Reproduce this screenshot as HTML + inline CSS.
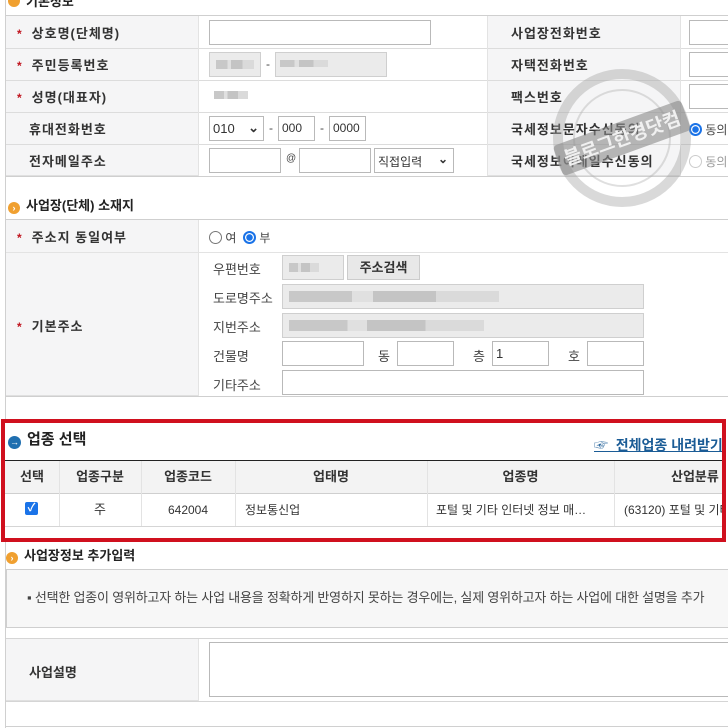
<!DOCTYPE html>
<html><head><meta charset="utf-8">
<style>
*{margin:0;padding:0;box-sizing:border-box}
body{width:728px;height:728px;overflow:hidden;background:#fff;position:relative;font-family:"Liberation Sans","Noto Sans CJK KR",sans-serif;font-size:13px;color:#333}
.a{position:absolute}
.lab{position:absolute;background:#f5f5f6;border-bottom:1px solid #e0e0e0}
.hl{position:absolute;height:1px;background:#dcdcdc}
.vl{position:absolute;width:1px;background:#e3e3e3}
.t{position:absolute;font-weight:bold;font-size:13px;color:#333;white-space:nowrap;letter-spacing:1px}
.star{color:#c0141e;font-size:12px;margin-right:9px;font-weight:bold}
.inp{position:absolute;border:1px solid #b9b9b9;background:#fff;height:25px;font-size:12px;padding:4px 3px;white-space:nowrap;overflow:hidden}
.dis{background:#ebebeb;border-color:#cfcfcf}
.blur{position:absolute;height:9px;background:linear-gradient(90deg,#c8c8c8 0 30%,#e0e0e0 30% 40%,#c4c4c4 40% 70%,#dadada 70%)}
.n{position:absolute;font-size:12px;color:#444;white-space:nowrap}
.sec{position:absolute;font-weight:bold;font-size:13px;color:#222;white-space:nowrap}
.dot{display:inline-block;width:12px;height:12px;border-radius:50%;background:#f0a030;vertical-align:-1px;margin-right:6px;color:#fff;font-size:9px;line-height:12px;text-align:center}
.th{position:absolute;top:461px;height:32px;line-height:32px;text-align:center;font-weight:bold;font-size:13px;color:#333;white-space:nowrap;overflow:hidden}
.td{position:absolute;top:494px;height:32px;line-height:32px;font-size:12px;color:#333;white-space:nowrap;overflow:hidden}
.radio{display:inline-block;width:13px;height:13px;border-radius:50%;border:1px solid #777;vertical-align:-2px;background:#fff}
.ron{border:2px solid #1a73e8;background:radial-gradient(#1a73e8 0 3px,#fff 3.5px)}
</style></head><body>
<div class="a" style="left:5px;top:0;width:1px;height:728px;background:#d0d0d0"></div>
<div class="a" style="left:5px;top:726px;width:723px;height:1px;background:#d0d0d0"></div>
<div class="sec" style="left:8px;top:-9px"><span class="dot"></span>기본정보</div>

<div class="hl" style="left:6px;top:15px;width:722px;background:#cfcfcf"></div>
<div class="lab" style="left:6px;top:16px;width:192px;height:160px"></div>
<div class="lab" style="left:487px;top:16px;width:193px;height:160px"></div>
<div class="hl" style="left:6px;top:48px;width:722px"></div>
<div class="hl" style="left:6px;top:80px;width:722px"></div>
<div class="hl" style="left:6px;top:112px;width:722px"></div>
<div class="hl" style="left:6px;top:144px;width:722px"></div>
<div class="hl" style="left:6px;top:176px;width:722px;background:#cfcfcf"></div>
<div class="vl" style="left:198px;top:16px;height:160px"></div>
<div class="vl" style="left:487px;top:16px;height:160px"></div>
<div class="vl" style="left:680px;top:16px;height:160px"></div>

<div class="t" style="left:17px;top:23px"><span class="star">*</span>상호명(단체명)</div>
<div class="t" style="left:17px;top:55px"><span class="star">*</span>주민등록번호</div>
<div class="t" style="left:17px;top:87px"><span class="star">*</span>성명(대표자)</div>
<div class="t" style="left:29px;top:119px">휴대전화번호</div>
<div class="t" style="left:29px;top:151px">전자메일주소</div>

<div class="inp" style="left:209px;top:20px;width:222px"></div>
<div class="inp dis" style="left:209px;top:52px;width:52px"><div class="blur" style="left:6px;top:7px;width:38px"></div></div>
<div class="n" style="left:266px;top:57px">-</div>
<div class="inp dis" style="left:275px;top:52px;width:112px"><div class="blur" style="left:4px;top:7px;width:48px;height:7px"></div></div>
<div class="blur" style="left:214px;top:91px;width:34px;height:8px"></div>
<div class="inp" style="left:209px;top:116px;width:55px;font-size:13px">010 <span style="position:absolute;right:4px;top:3px;font-weight:bold">&#8964;</span></div>
<div class="n" style="left:269px;top:121px">-</div>
<div class="inp" style="left:278px;top:116px;width:37px">000</div>
<div class="n" style="left:320px;top:121px">-</div>
<div class="inp" style="left:329px;top:116px;width:37px">0000</div>
<div class="inp" style="left:209px;top:148px;width:72px"></div>
<div class="n" style="left:286px;top:153px;font-size:10px">@</div>
<div class="inp" style="left:299px;top:148px;width:72px"></div>
<div class="inp" style="left:374px;top:148px;width:80px;font-size:12px">직접입력 <span style="position:absolute;right:5px;top:3px;font-weight:bold">&#8964;</span></div>

<div class="t" style="left:511px;top:23px">사업장전화번호</div>
<div class="t" style="left:511px;top:55px">자택전화번호</div>
<div class="t" style="left:511px;top:87px">팩스번호</div>
<div class="t" style="left:511px;top:119px">국세정보문자수신동의</div>
<div class="t" style="left:511px;top:151px">국세정보이메일수신동의</div>
<div class="inp" style="left:689px;top:20px;width:45px"></div>
<div class="inp" style="left:689px;top:52px;width:45px"></div>
<div class="inp" style="left:689px;top:84px;width:45px"></div>
<div class="n" style="left:689px;top:121px"><span class="radio ron"></span> 동의</div>
<div class="n" style="left:689px;top:153px;color:#999"><span class="radio" style="border-color:#ccc"></span> 동의</div>

<svg class="a" style="left:550px;top:60px" width="145" height="155" viewBox="0 0 145 155">
<circle cx="72" cy="78" r="64" fill="none" stroke="#a0a0a0" stroke-width="10" opacity=".4"/>
<circle cx="72" cy="78" r="48" fill="none" stroke="#b0b0b0" stroke-width="2" opacity=".4"/>
<g transform="rotate(-20 72 78)"><rect x="4" y="62" width="136" height="32" rx="4" fill="#8a8a8a" opacity=".6"/>
<text x="72" y="85" text-anchor="middle" font-size="19" font-weight="bold" fill="#f0f0f0" font-family="Noto Sans CJK KR,sans-serif">블로그한경닷컴</text></g>
</svg>

<div class="sec" style="left:8px;top:195px"><span class="dot">›</span>사업장(단체) 소재지</div>
<div class="hl" style="left:6px;top:219px;width:722px;background:#cfcfcf"></div>
<div class="lab" style="left:6px;top:220px;width:192px;height:176px"></div>
<div class="hl" style="left:6px;top:252px;width:722px;background:#e3e3e3"></div>
<div class="hl" style="left:6px;top:396px;width:722px;background:#cfcfcf"></div>
<div class="vl" style="left:198px;top:220px;height:176px"></div>
<div class="t" style="left:17px;top:227px"><span class="star">*</span>주소지 동일여부</div>
<div class="t" style="left:17px;top:316px"><span class="star">*</span>기본주소</div>
<div class="n" style="left:209px;top:229px"><span class="radio"></span> 여 &nbsp;<span class="radio ron"></span> 부</div>

<div class="n" style="left:213px;top:259px;font-size:13px">우편번호</div>
<div class="n" style="left:213px;top:288px;font-size:13px">도로명주소</div>
<div class="n" style="left:213px;top:317px;font-size:13px">지번주소</div>
<div class="n" style="left:213px;top:346px;font-size:13px">건물명</div>
<div class="n" style="left:213px;top:375px;font-size:13px">기타주소</div>
<div class="inp dis" style="left:282px;top:255px;width:62px"><div class="blur" style="left:6px;top:7px;width:30px"></div></div>
<div class="a" style="left:347px;top:255px;width:73px;height:25px;background:#e8e8e8;border:1px solid #ccc;font-weight:bold;font-size:13px;text-align:center;line-height:23px">주소검색</div>
<div class="inp dis" style="left:282px;top:284px;width:362px"><div class="blur" style="left:6px;top:6px;width:210px;height:11px"></div></div>
<div class="inp dis" style="left:282px;top:313px;width:362px"><div class="blur" style="left:6px;top:6px;width:195px;height:11px"></div></div>
<div class="inp" style="left:282px;top:341px;width:82px"></div>
<div class="n" style="left:378px;top:346px;font-size:13px">동</div>
<div class="inp" style="left:397px;top:341px;width:57px"></div>
<div class="n" style="left:473px;top:346px;font-size:13px">층</div>
<div class="inp" style="left:492px;top:341px;width:57px;font-size:13px">1</div>
<div class="n" style="left:568px;top:346px;font-size:13px">호</div>
<div class="inp" style="left:587px;top:341px;width:57px"></div>
<div class="inp" style="left:282px;top:370px;width:362px"></div>

<div class="a" style="left:1px;top:419px;width:725px;height:123px;border:4px solid #d0101e;background:#fff"></div>
<div class="sec" style="left:8px;top:428px;font-size:15px"><span class="dot" style="background:#1f6fb0;width:13px;height:13px;line-height:13px">→</span>업종 선택</div>
<div class="a" style="left:594px;top:435px;font-weight:bold;font-size:14px;color:#1b5c96;text-decoration:underline;white-space:nowrap;width:128px;overflow:hidden">☞&nbsp;&nbsp;전체업종 내려받기</div>
<div class="a" style="left:5px;top:460px;width:717px;height:1px;background:#222"></div>
<div class="a" style="left:5px;top:461px;width:717px;height:32px;background:#f3f3f3"></div>
<div class="a" style="left:5px;top:493px;width:717px;height:1px;background:#cfcfcf"></div>
<div class="a" style="left:5px;top:526px;width:717px;height:1px;background:#d5d5d5"></div>
<div class="vl" style="left:59px;top:461px;height:65px"></div>
<div class="vl" style="left:141px;top:461px;height:65px"></div>
<div class="vl" style="left:235px;top:461px;height:65px"></div>
<div class="vl" style="left:427px;top:461px;height:65px"></div>
<div class="vl" style="left:614px;top:461px;height:65px"></div>
<div class="th" style="left:5px;width:54px">선택</div>
<div class="th" style="left:59px;width:82px">업종구분</div>
<div class="th" style="left:141px;width:94px">업종코드</div>
<div class="th" style="left:235px;width:192px">업태명</div>
<div class="th" style="left:427px;width:187px">업종명</div>
<div class="th" style="left:614px;width:108px;text-align:left;padding-left:57px">산업분류</div>
<div class="a" style="left:25px;top:502px;width:13px;height:13px;background:#1a73e8;border-radius:2px;color:#fff;font-size:11px;line-height:13px;text-align:center;font-weight:bold">✓</div>
<div class="td" style="left:59px;width:82px;text-align:center;font-size:13px">주</div>
<div class="td" style="left:141px;width:94px;text-align:center">642004</div>
<div class="td" style="left:245px;width:180px">정보통신업</div>
<div class="td" style="left:436px;width:175px">포털 및 기타 인터넷 정보 매…</div>
<div class="td" style="left:624px;width:98px">(63120) 포털 및 기타</div>

<div class="sec" style="left:6px;top:545px"><span class="dot">›</span>사업장정보 추가입력</div>
<div class="a" style="left:6px;top:569px;width:722px;height:59px;background:#f7f7f7;border:1px solid #cfcfcf;border-right:none"></div>
<div class="n" style="left:27px;top:587px;font-size:13px;color:#444;letter-spacing:-0.2px">▪ 선택한 업종이 영위하고자 하는 사업 내용을 정확하게 반영하지 못하는 경우에는, 실제 영위하고자 하는 사업에 대한 설명을 추가</div>
<div class="hl" style="left:6px;top:638px;width:722px;background:#d5d5d5"></div>
<div class="lab" style="left:6px;top:639px;width:192px;height:62px"></div>
<div class="vl" style="left:198px;top:639px;height:62px"></div>
<div class="hl" style="left:6px;top:701px;width:722px;background:#d5d5d5"></div>
<div class="t" style="left:29px;top:662px;letter-spacing:0">사업설명</div>
<div class="a" style="left:209px;top:642px;width:530px;height:55px;border:1px solid #b9b9b9;background:#fff"></div>
</body></html>
